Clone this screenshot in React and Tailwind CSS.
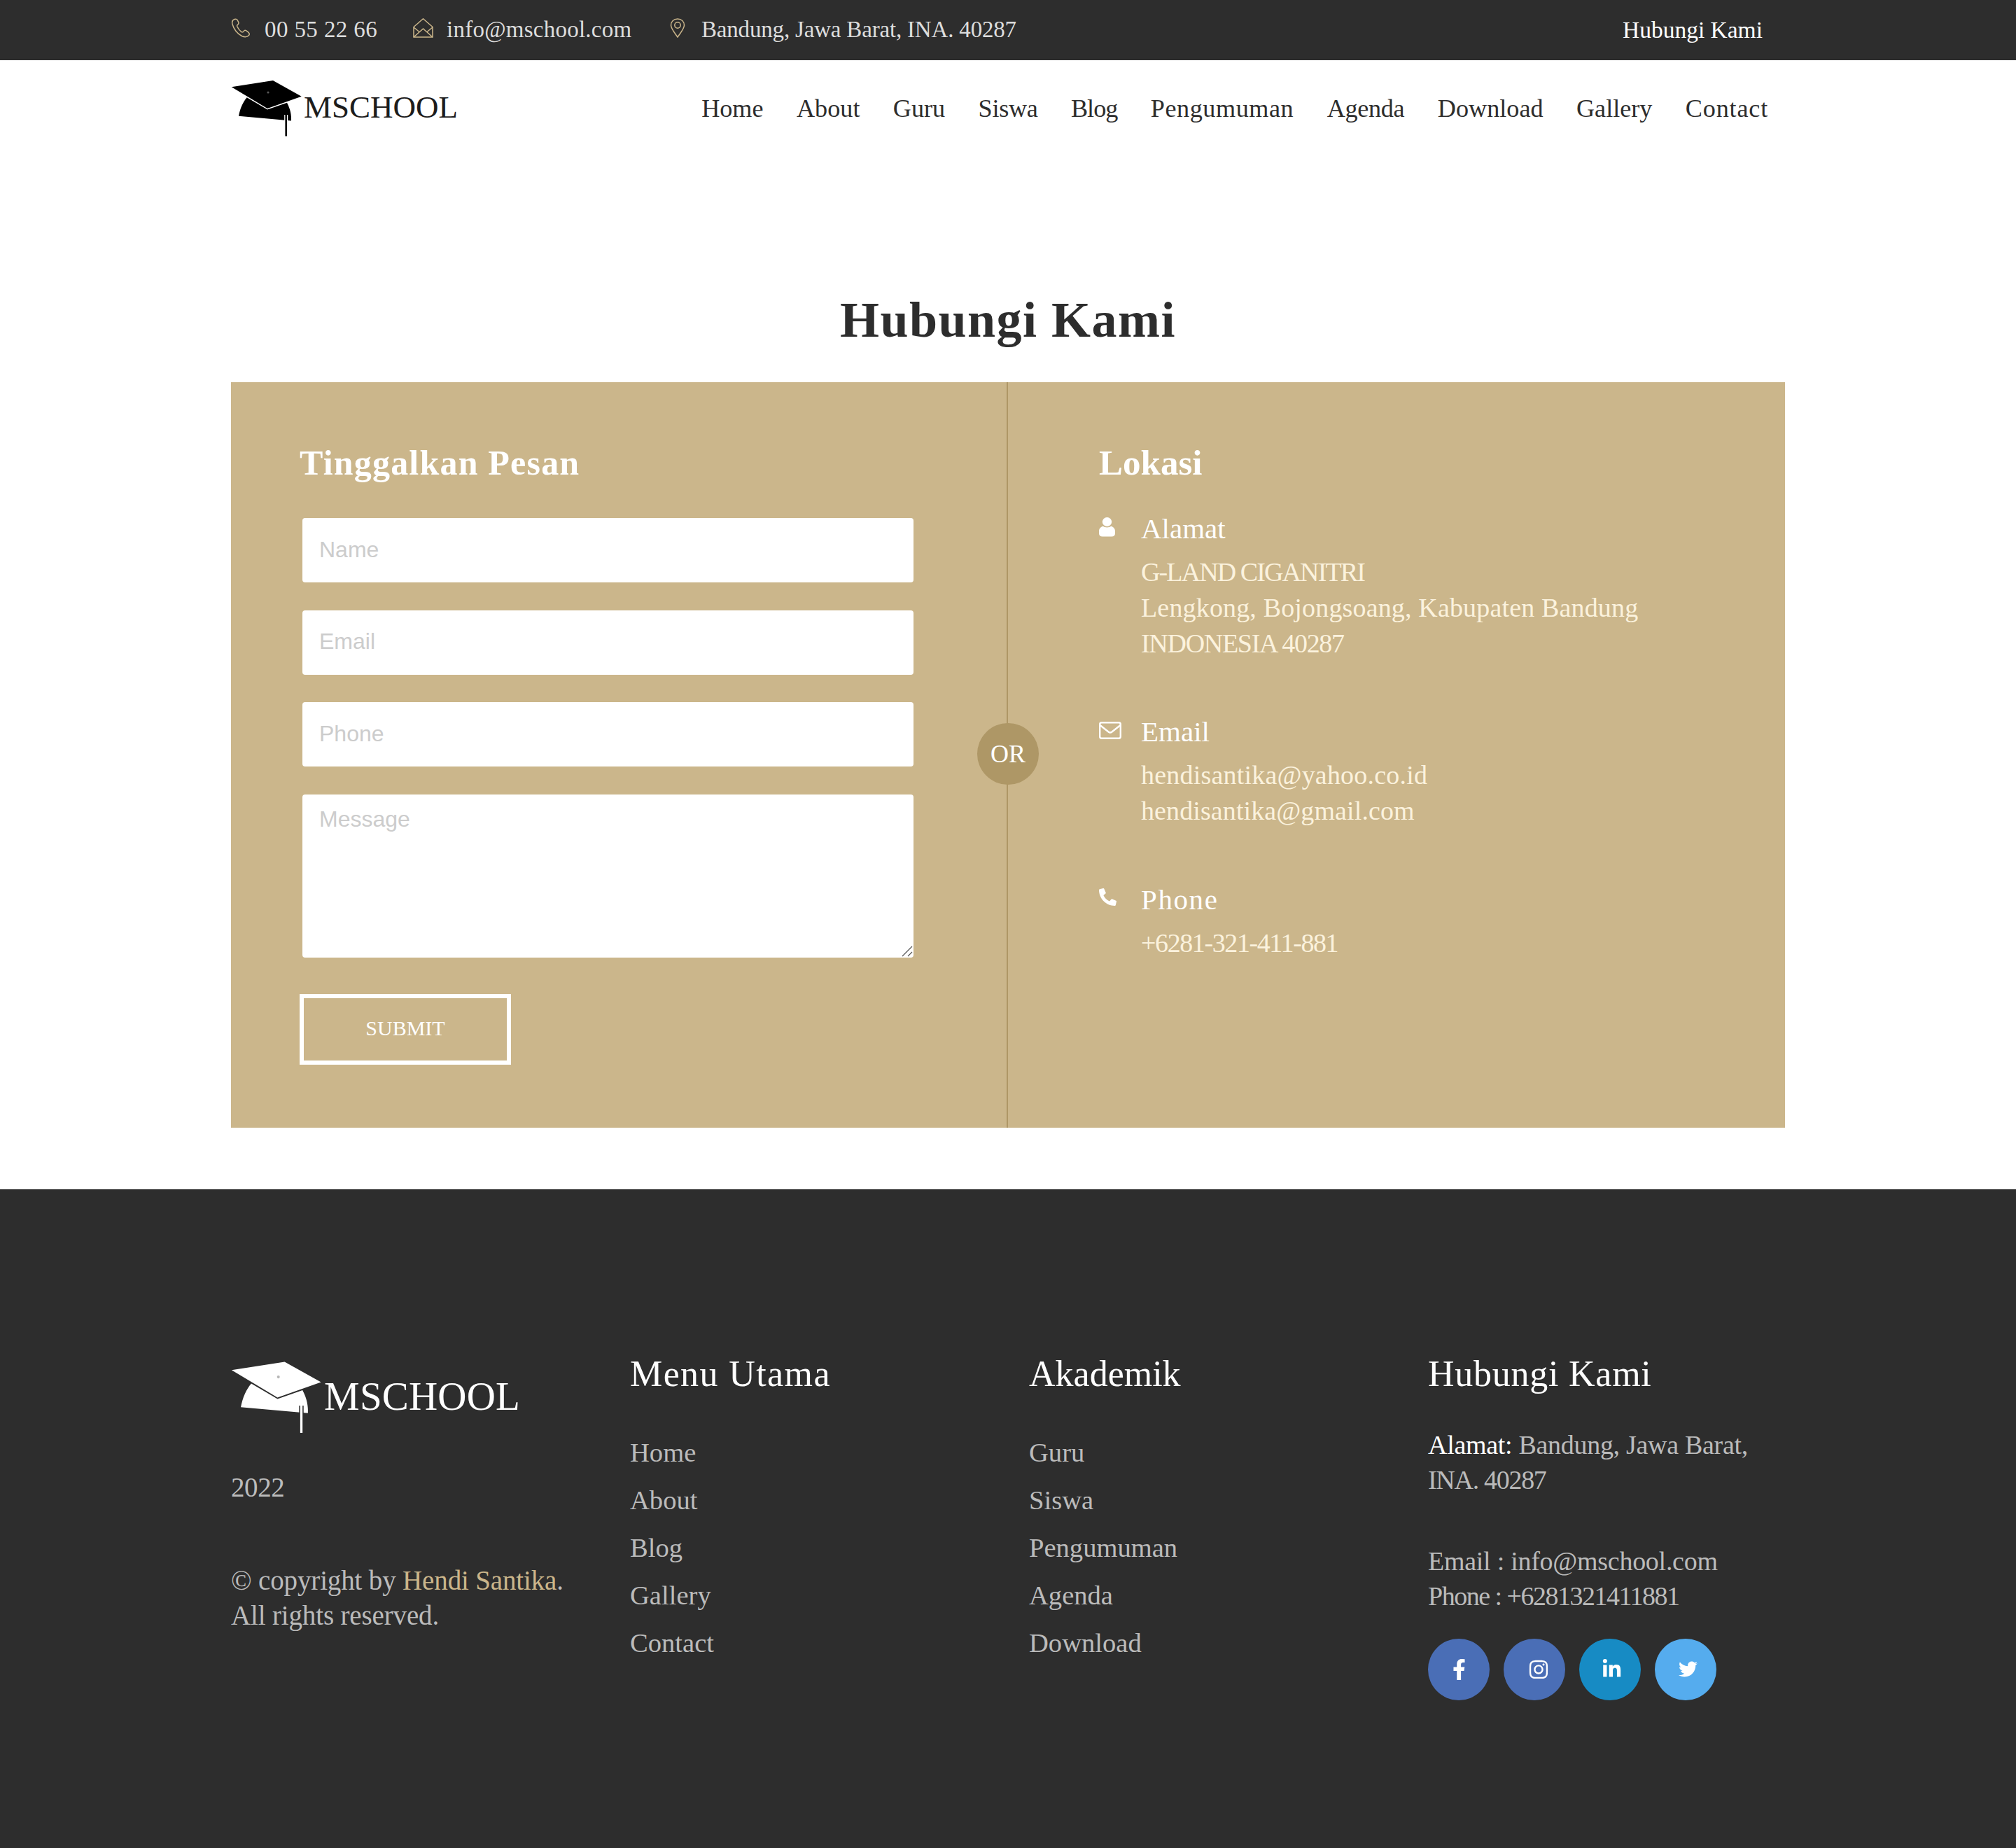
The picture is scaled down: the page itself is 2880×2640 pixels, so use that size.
import { FaFacebookF, FaInstagram, FaLinkedinIn, FaTwitter, FaPhoneAlt } from "react-icons/fa";

const navItems = [
  { label: "Home", className: "" },
  { label: "About", className: "" },
  { label: "Guru", className: "" },
  { label: "Siswa", className: "tracking-[-0.3px]" },
  { label: "Blog", className: "tracking-[-1px]" },
  { label: "Pengumuman", className: "tracking-[0.55px]" },
  { label: "Agenda", className: "tracking-[-0.3px]" },
  { label: "Download", className: "" },
  { label: "Gallery", className: "" },
  { label: "Contact", className: "tracking-[0.8px]" },
];
const menuUtama = ["Home", "About", "Blog", "Gallery", "Contact"];
const akademik = ["Guru", "Siswa", "Pengumuman", "Agenda", "Download"];

function Cap({ className, fill, gap }) {
  return (
    <svg viewBox="0 0 101 80" className={className}>
      <path d="M0.7 9.3 L60 0 L100.7 22.7 L52 40 Z" fill={fill} />
      <path d="M22.7 24.3 L52 41.5 L80 31.7 C85 41 86.5 50 86 57.5 L11 50.7 C13 40 17 31 22.7 24.3 Z" fill={fill} />
      <circle cx="53" cy="17" r="1.6" fill={gap} opacity="0.35" />
      <path d="M78.7 49 V79" stroke={gap} strokeWidth="5" />
      <path d="M78.7 48 V79.5" stroke={fill} strokeWidth="2.6" />
    </svg>
  );
}

function TopPhone() {
  return (
    <svg viewBox="0 0 28 28" className="mb-[6px] h-[28px] w-[28px]" fill="none" stroke="#cbb68b" strokeWidth="1.5">
      <path d="M5 1.5 C2.5 2.5 1 5 2 8.5 C4 15.5 9 22 15.5 25.5 C19 27 23 27 25.5 24.5 C27 22.5 26 21 24.5 19.8 L21.5 17.6 C20 16.8 18.8 17.5 18 18.8 C17.2 20 16 20.3 14.6 19.3 C12 17.3 10 14.5 8.8 11.8 C8.2 10.3 9 9.4 10 8.8 C11 8 11.2 7 10.8 5.8 L9 2.4 C8 1 6.5 1 5 1.5 Z" />
    </svg>
  );
}

function TopEnvelope() {
  return (
    <svg viewBox="0 0 29 28" className="mb-[6px] h-[28px] w-[29px]" fill="none" stroke="#cbb68b" strokeWidth="1.5">
      <path d="M1 27 H28 V12.5 L14.5 0.8 L1 12.5 Z" />
      <path d="M1 27 L14.5 15 L28 27" />
      <path d="M1 13 L9 19.5 M28 13 L20 19.5" />
    </svg>
  );
}

function TopPin() {
  return (
    <svg viewBox="0 0 22 28" className="mb-[6px] h-[28px] w-[22px]" fill="none" stroke="#cbb68b" strokeWidth="1.5">
      <path d="M11 27 C7 21 1.5 15 1.5 10 C1.5 4.8 5.6 1 11 1 C16.4 1 20.5 4.8 20.5 10 C20.5 15 15 21 11 27 Z" />
      <circle cx="11" cy="10" r="4.2" />
    </svg>
  );
}

function UserIcon() {
  return (
    <svg viewBox="0 0 23 28" className="h-[28px] w-[23px]" fill="#fff">
      <ellipse cx="11.5" cy="6.5" rx="6.7" ry="6.5" />
      <path d="M0 20 C0 15.5 3 13.5 6 12.8 C8 15 15 15 17 12.8 C20 13.5 23 15.5 23 20 V23 C23 26 21 27.5 18 27.5 H5 C2 27.5 0 26 0 23 Z" />
    </svg>
  );
}

function MailIcon() {
  return (
    <svg viewBox="0 0 32 25" className="h-[25px] w-[32px]" fill="none" stroke="#fff" strokeWidth="2.4">
      <rect x="1.2" y="1.2" width="29.6" height="22.6" rx="2.5" />
      <path d="M1.5 5 L13.5 14.5 C15 15.6 17 15.6 18.5 14.5 L30.5 5" />
    </svg>
  );
}

function Field({ placeholder }) {
  return (
    <input
      placeholder={placeholder}
      className="h-[92px] w-[873px] rounded-[4px] bg-white px-[24px] pb-[2px] font-['Liberation_Sans',sans-serif] text-[32px] outline-none placeholder:text-[#ccc]"
    />
  );
}

function ContactItem({ icon, title, titleClass, lines, className }) {
  return (
    <div className={`flex ${className}`}>
      <div className="w-[60px] shrink-0">{icon}</div>
      <div>
        <div className={`text-[41px] leading-[50px] text-white ${titleClass}`}>{title}</div>
        <div className="mt-[12px] text-[38px] leading-[51px] text-[#fbf2dd]">
          {lines.map((line) => (
            <div key={line.text} className={line.className}>
              {line.text}
            </div>
          ))}
        </div>
      </div>
    </div>
  );
}

function LinkColumn({ title, titleClass, items }) {
  return (
    <div>
      <h4 className={`text-[52px] leading-[64px] font-normal text-white ${titleClass}`}>{title}</h4>
      <div className="mt-[46px] text-[38.6px] leading-[68px] text-[#bbb]">
        {items.map((item) => (
          <div key={item}>{item}</div>
        ))}
      </div>
    </div>
  );
}

export default function App() {
  return (
    <div className="bg-white font-['Liberation_Serif',serif]">
      <div className="h-[86px] bg-[#2d2d2d]">
        <div className="mx-auto flex h-full w-[2220px] items-center justify-between pr-[32px] text-[33px] text-[#ddd]">
          <div className="flex items-center">
            <TopPhone />
            <span className="ml-[20px] w-[212px] tracking-[0.4px]">00 55 22 66</span>
            <TopEnvelope />
            <span className="ml-[19px] w-[319px] tracking-[0.25px]">info@mschool.com</span>
            <TopPin />
            <span className="ml-[23px] tracking-[-0.18px]">Bandung, Jawa Barat, INA. 40287</span>
          </div>
          <span className="text-[33.5px] text-white">Hubungi Kami</span>
        </div>
      </div>

      <div className="mx-auto flex h-[331px] w-[2220px] items-start justify-between pr-[24px]">
        <div className="mt-[29px] flex items-center">
          <Cap className="h-[80px] w-[101px]" fill="#000" gap="#fff" />
          <span className="mb-[4px] ml-[3px] text-[45px] leading-none text-[#1c1c1c]">MSCHOOL</span>
        </div>
        <nav className="mt-[47px] flex gap-[47.4px] text-[36.2px] leading-[44px] text-[#2d2d2d]">
          {navItems.map((item) => (
            <span key={item.label} className={item.className}>
              {item.label}
            </span>
          ))}
        </nav>
      </div>

      <h2 className="text-center text-[72px] leading-[80px] font-bold tracking-[1.5px] text-[#2d2d2d]">Hubungi Kami</h2>

      <div className="relative mx-auto mt-[49px] flex w-[2220px] bg-[#cbb68b]">
        <div className="w-[1108px] pt-[85px] pb-[90px] pl-[98px]">
          <h3 className="text-[50px] leading-[60px] font-bold tracking-[1.2px] text-white">Tinggalkan Pesan</h3>
          <div className="mt-[49px] ml-[4px] flex flex-col gap-[39.5px]">
            <Field placeholder="Name" />
            <Field placeholder="Email" />
            <Field placeholder="Phone" />
            <div className="relative w-[873px]">
              <textarea
                placeholder="Message"
                className="block h-[233px] w-[873px] resize-none rounded-[4px] bg-white px-[24px] py-[11px] font-['Liberation_Sans',sans-serif] text-[32px] outline-none placeholder:text-[#ccc]"
              />
              <svg viewBox="0 0 16 16" className="pointer-events-none absolute right-[1px] bottom-[1px] h-[16px] w-[16px]" stroke="#555" strokeWidth="1.2">
                <path d="M1 15 L15 1 M9 15 L15 9" />
              </svg>
            </div>
          </div>
          <button className="mt-[52px] block h-[101px] w-[302px] border-[6px] border-white pb-[4px] text-[30px] text-white">SUBMIT</button>
        </div>

        <div className="flex-1 border-l-2 border-[#ae9766] pt-[85px] pl-[130px]">
          <h3 className="text-[51px] leading-[60px] font-bold text-white">Lokasi</h3>
          <ContactItem
            className="mt-[39px]"
            icon={<div className="mt-[9px]"><UserIcon /></div>}
            title="Alamat"
            lines={[
              { text: "G-LAND CIGANITRI", className: "tracking-[-1.9px]" },
              { text: "Lengkong, Bojongsoang, Kabupaten Bandung", className: "tracking-[0.16px]" },
              { text: "INDONESIA 40287", className: "tracking-[-1.3px]" },
            ]}
          />
          <ContactItem
            className="mt-[75px]"
            icon={<div className="mt-[11px]"><MailIcon /></div>}
            title="Email"
            lines={[
              { text: "hendisantika@yahoo.co.id", className: "tracking-[0.2px]" },
              { text: "hendisantika@gmail.com", className: "tracking-[0.1px]" },
            ]}
          />
          <ContactItem
            className="mt-[76px]"
            icon={<FaPhoneAlt className="mt-[9px] h-[25px] w-[25px] text-white" />}
            title="Phone"
            titleClass="tracking-[1.6px]"
            lines={[{ text: "+6281-321-411-881", className: "tracking-[-1.4px]" }]}
          />
        </div>

        <div className="absolute top-[487px] left-[1066px] flex h-[88px] w-[88px] items-center justify-center rounded-full bg-[#ae9766] text-[36px] text-white">
          OR
        </div>
      </div>

      <footer className="mt-[88px] h-[941px] bg-[#2d2d2d] pt-[232px]">
        <div className="mx-auto grid w-[2220px] grid-cols-[570px_570px_570px_510px]">
          <div>
            <div className="mt-[14px] flex items-center">
              <Cap className="h-[103px] w-[129px]" fill="#fff" gap="#2d2d2d" />
              <span className="mb-[4px] ml-[4px] text-[57px] leading-none tracking-[0.2px] text-white">MSCHOOL</span>
            </div>
            <div className="mt-[52px] text-[39px] leading-[50px] tracking-[-0.4px] text-[#bbb]">2022</div>
            <div className="mt-[83px] text-[39px] leading-[50px] tracking-[-0.15px] text-[#bbb]">
              © copyright by <span className="text-[#cbb68b]">Hendi Santika</span>.
              <br />
              All rights reserved.
            </div>
          </div>
          <LinkColumn title="Menu Utama" titleClass="tracking-[1.4px]" items={menuUtama} />
          <LinkColumn title="Akademik" titleClass="" items={akademik} />
          <div>
            <h4 className="text-[52px] leading-[64px] font-normal tracking-[0.75px] text-white">Hubungi Kami</h4>
            <div className="mt-[44px] text-[38px] leading-[50px] text-[#bbb]">
              <div className="tracking-[-0.3px]">
                <span className="text-white">Alamat:</span> Bandung, Jawa Barat,
              </div>
              <div className="tracking-[-1.3px]">INA. 40287</div>
            </div>
            <div className="mt-[66px] text-[38px] leading-[50px] text-[#bbb]">
              <div className="tracking-[-0.27px]">Email : info@mschool.com</div>
              <div className="tracking-[-1.5px]">Phone : +6281321411881</div>
            </div>
            <div className="mt-[36px] flex gap-[20px]">
              <div className="flex h-[88px] w-[88px] items-center justify-center rounded-full bg-[#4a6eb6] pl-[1px]">
                <FaFacebookF className="h-[30px] w-[19px] text-white" />
              </div>
              <div className="flex h-[88px] w-[88px] items-center justify-center rounded-full bg-[#4a6eb6] pl-[12px]">
                <FaInstagram className="h-[30px] w-[30px] text-white" />
              </div>
              <div className="flex h-[88px] w-[88px] items-center justify-center rounded-full bg-[#178bc4] pl-[4px]">
                <FaLinkedinIn className="h-[29px] w-[29px] text-white" />
              </div>
              <div className="flex h-[88px] w-[88px] items-center justify-center rounded-full bg-[#55acee] pl-[6px]">
                <FaTwitter className="h-[27px] w-[27px] text-white" />
              </div>
            </div>
          </div>
        </div>
      </footer>
    </div>
  );
}
